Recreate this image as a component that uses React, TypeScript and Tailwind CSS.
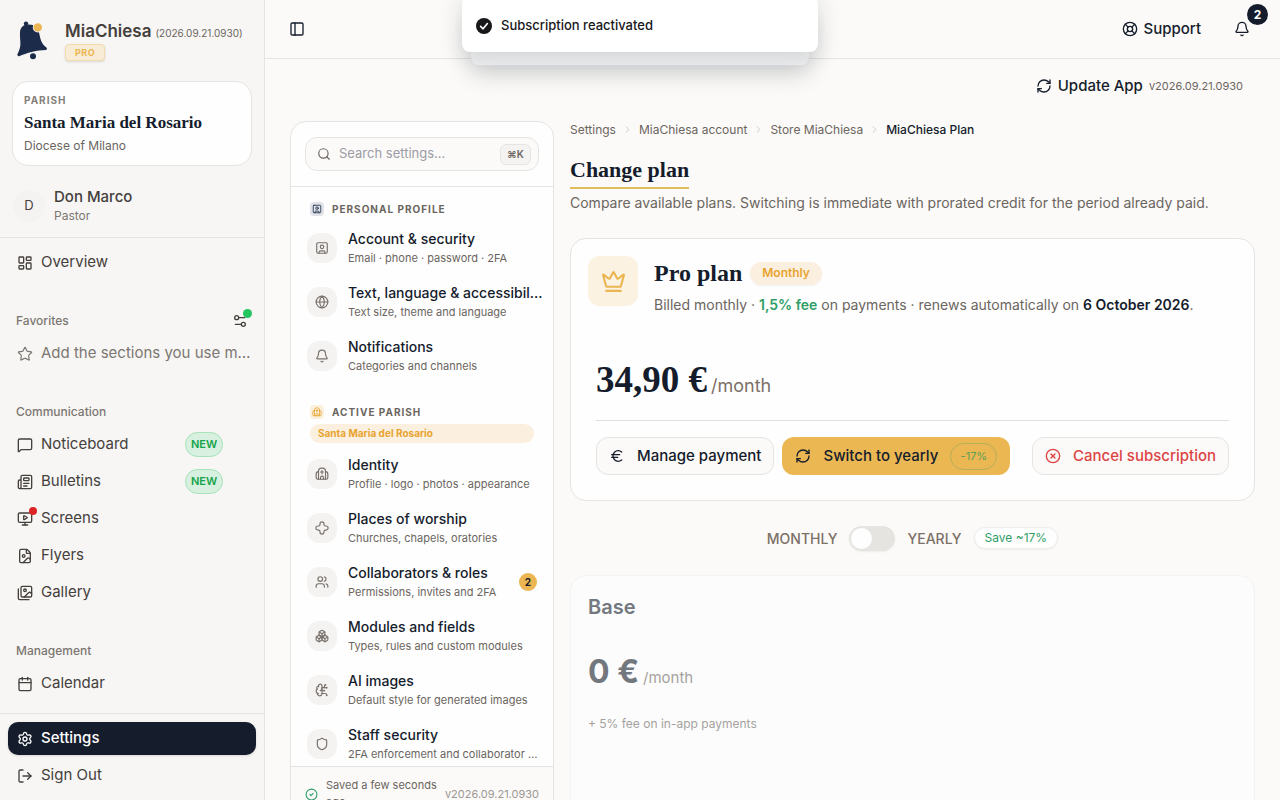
import { useState } from 'react'
import type { ComponentType, ReactNode } from 'react'
import {
  Bell,
  Boxes,
  BrainCircuit,
  Calendar,
  ChevronRight,
  CircleCheck,
  CircleX,
  Crown,
  Euro,
  FileImage,
  Globe,
  LayoutDashboard,
  LifeBuoy,
  LogOut,
  MessageSquare,
  MonitorPlay,
  Newspaper,
  PanelLeft,
  RefreshCw,
  Search,
  Settings,
  Settings2,
  Shield,
  SquareUser,
  Star,
  Users,
} from 'lucide-react'

const VERSION = '2026.09.21.0930'

type IconProps = { size?: number; strokeWidth?: number; className?: string }
type IconType = ComponentType<IconProps>
type NavItem = { label: string; icon: IconType; isNew?: boolean; alert?: boolean }
type SettingsItem = { title: string; sub: string; icon: IconType; count?: number }

// icons that lucide does not have in this shape
function Glyph({ size = 24, strokeWidth = 2, children }: IconProps & { children: ReactNode }) {
  return (
    <svg
      width={size}
      height={size}
      viewBox="0 0 24 24"
      fill="none"
      stroke="currentColor"
      strokeWidth={strokeWidth}
      strokeLinecap="round"
      strokeLinejoin="round"
      aria-hidden="true"
    >
      {children}
    </svg>
  )
}

function SoftCross(props: IconProps) {
  return (
    <Glyph {...props}>
      <path d="M8.5 5a3.5 3.5 0 0 1 7 0v1.5a2 2 0 0 0 2 2H19a3.5 3.5 0 0 1 0 7h-1.5a2 2 0 0 0-2 2V19a3.5 3.5 0 0 1-7 0v-1.5a2 2 0 0 0-2-2H5a3.5 3.5 0 0 1 0-7h1.5a2 2 0 0 0 2-2Z" />
    </Glyph>
  )
}

function ParishChurch(props: IconProps) {
  return (
    <Glyph {...props}>
      <path d="M6 21V7a5 5 0 0 1 5-5h2a5 5 0 0 1 5 5v14" />
      <path d="M6 8a4 4 0 0 0-4 4v6a3 3 0 0 0 3 3h14a3 3 0 0 0 3-3v-6a4 4 0 0 0-4-4" />
      <path d="M12 6v6" />
      <path d="M9.5 8.5h5" />
      <path d="M9.5 21v-3a2.5 2.5 0 0 1 5 0v3" />
    </Glyph>
  )
}

function ImageStack(props: IconProps) {
  return (
    <Glyph {...props}>
      <path d="M18 22H4a2 2 0 0 1-2-2V6" />
      <path d="m22 13-1.296-1.296a2.41 2.41 0 0 0-3.408 0L11 18" />
      <circle cx="12" cy="8" r="2" />
      <rect width="16" height="16" x="6" y="2" rx="2" />
    </Glyph>
  )
}

const communication: NavItem[] = [
  { label: 'Noticeboard', icon: MessageSquare, isNew: true },
  { label: 'Bulletins', icon: Newspaper, isNew: true },
  { label: 'Screens', icon: MonitorPlay, alert: true },
  { label: 'Flyers', icon: FileImage },
  { label: 'Gallery', icon: ImageStack },
]

const management: NavItem[] = [{ label: 'Calendar', icon: Calendar }]

const personal: SettingsItem[] = [
  { title: 'Account & security', sub: 'Email · phone · password · 2FA', icon: SquareUser },
  { title: 'Text, language & accessibility', sub: 'Text size, theme and language', icon: Globe },
  { title: 'Notifications', sub: 'Categories and channels', icon: Bell },
]

const parish: SettingsItem[] = [
  { title: 'Identity', sub: 'Profile · logo · photos · appearance', icon: ParishChurch },
  { title: 'Places of worship', sub: 'Churches, chapels, oratories', icon: SoftCross },
  { title: 'Collaborators & roles', sub: 'Permissions, invites and 2FA', icon: Users, count: 2 },
  { title: 'Modules and fields', sub: 'Types, rules and custom modules', icon: Boxes },
  { title: 'AI images', sub: 'Default style for generated images', icon: BrainCircuit },
  { title: 'Staff security', sub: '2FA enforcement and collaborator access', icon: Shield },
]

const crumbs = ['Settings', 'MiaChiesa account', 'Store MiaChiesa']

function Logo() {
  return (
    <svg width="32" height="40" viewBox="0 0 32 40" aria-hidden="true">
      <circle cx="9" cy="2.6" r="2.2" fill="#1c2b49" />
      <path
        d="M3 12C3 7 6 4 10 3.6C14 3.2 18 4.2 20 7C22.6 10.6 22.4 15 24 19.5C25.2 23 27.4 25 29.4 26.4C30.4 27.2 30 28.8 28.8 29C24 29.2 20 29.6 15.5 30.8C10 32.2 5.6 33.6 2.2 35.2C1 35.6 0 34.2 .5 33C2.4 29.4 3.6 26 3.4 21.5C3.2 18 2.8 15 3 12Z"
        fill="#1c2b49"
      />
      <circle cx="16" cy="35.2" r="3" fill="#1c2b49" />
      <circle cx="20.8" cy="6.4" r="5" fill="#f7f6f4" />
      <circle cx="20.8" cy="6.4" r="4.2" fill="#ebb551" />
    </svg>
  )
}

function NavLink({ item }: { item: NavItem }) {
  const Icon = item.icon
  return (
    <a href="#" className="flex h-[33px] items-center gap-2 rounded-lg px-[9px] text-[15px] text-[#44403c]">
      <span className="relative shrink-0">
        <Icon size={16} strokeWidth={2} />
        {item.alert && <span className="absolute -top-1 -right-1 size-2 rounded-full bg-[#dc2626]" />}
      </span>
      <span className="flex-1">{item.label}</span>
      {item.isNew && (
        <span className="mr-6 flex h-[25px] w-[38px] items-center justify-center rounded-full border border-[#a6e2bb] bg-[#d8f0e0] text-[11px] font-semibold text-[#16a34a]">
          NEW
        </span>
      )}
    </a>
  )
}

function NavGroup({ title, children, action }: { title: string; children: ReactNode; action?: ReactNode }) {
  return (
    <section className="mt-[25px]">
      <div className="flex h-[33px] items-center justify-between px-2">
        <h2 className="text-[12px] font-medium text-[#7c7772]">{title}</h2>
        {action}
      </div>
      <div className="flex flex-col gap-1">{children}</div>
    </section>
  )
}

function Sidebar() {
  return (
    <aside className="flex w-[265px] shrink-0 flex-col border-r border-[#e5e4e1] bg-[#f7f6f4]">
      <div className="flex items-center gap-4 px-[17px] pt-5">
        <Logo />
        <div className="min-w-0">
          <p className="flex items-baseline gap-1 leading-[22px] whitespace-nowrap">
            <span className="text-[17px] font-semibold text-[#44403c]">MiaChiesa</span>
            <span className="text-[10px] text-[#6b6560]">({VERSION})</span>
          </p>
          <span className="flex h-[17px] w-10 items-center justify-center rounded-sm border border-[#f2dcae] bg-[#f8ecd6] text-[9px] font-bold tracking-wider text-[#ebb551] shadow-sm">
            PRO
          </span>
        </div>
      </div>

      <div className="mx-3 mt-5 rounded-2xl border border-[#e5e4e1] bg-[#fefefe] p-[11px]">
        <p className="text-[10px] leading-[15px] font-bold tracking-widest text-[#857f7a]">PARISH</p>
        <p className="font-['Liberation_Serif',serif] text-[17px] leading-[30px] font-bold text-[#151c2c]">
          Santa Maria del Rosario
        </p>
        <p className="text-[12px] leading-[16px] text-[#6b6560]">Diocese of Milano</p>
      </div>

      <div className="flex items-center gap-[9px] px-[13px] pt-[21px] pb-3">
        <span className="flex size-8 items-center justify-center rounded-full bg-[#f4f3f1] text-[13px] text-[#44403c]">
          D
        </span>
        <div>
          <p className="text-[15px] leading-[20px] font-medium text-[#44403c]">Don Marco</p>
          <p className="text-[12px] leading-[18px] text-[#7c7772]">Pastor</p>
        </div>
      </div>

      <nav className="min-h-0 flex-1 overflow-hidden border-t border-[#e5e4e1] px-2 pt-2">
        <NavLink item={{ label: 'Overview', icon: LayoutDashboard }} />
        <NavGroup
          title="Favorites"
          action={
            <button className="relative text-[#44403c]" aria-label="Edit favorites">
              <Settings2 size={16} />
              <span className="absolute -top-1 -right-1 size-[9px] rounded-full bg-[#22c55e]" />
            </button>
          }
        >
          <a href="#" className="flex h-[33px] items-center gap-2 pr-1 pl-[9px] text-[15px] text-[#7c7772]">
            <Star size={16} strokeWidth={1.75} className="shrink-0" />
            <span className="truncate">Add the sections you use most</span>
          </a>
        </NavGroup>
        <NavGroup title="Communication">
          {communication.map(item => (
            <NavLink key={item.label} item={item} />
          ))}
        </NavGroup>
        <NavGroup title="Management">
          {management.map(item => (
            <NavLink key={item.label} item={item} />
          ))}
        </NavGroup>
      </nav>

      <div className="flex flex-col gap-1 border-t border-[#e5e4e1] p-2">
        <a
          href="#"
          className="flex h-[33px] items-center gap-2 rounded-[10px] bg-[#151d2d] px-[9px] text-[15px] font-medium text-white shadow-sm"
        >
          <Settings size={16} />
          Settings
        </a>
        <NavLink item={{ label: 'Sign Out', icon: LogOut }} />
      </div>
    </aside>
  )
}

function SettingsRow({ item }: { item: SettingsItem }) {
  const Icon = item.icon
  return (
    <a href="#" className="flex h-[54px] items-center gap-[11px]">
      <span className="flex size-[30px] shrink-0 items-center justify-center rounded-xl bg-[#f4f3f1] text-[#78716c]">
        <Icon size={14} strokeWidth={2} />
      </span>
      <span className="min-w-0 flex-1">
        <span className="-mr-2 block truncate text-[14px] leading-[20px] font-medium text-[#151c2c]">{item.title}</span>
        <span className="-mr-1 block truncate text-[11px] leading-[18px] text-[#6b6560]">{item.sub}</span>
      </span>
      {item.count && (
        <span className="flex size-[18px] items-center justify-center rounded-full bg-[#ebb551] text-[10px] font-bold text-[#151c2c]">
          {item.count}
        </span>
      )}
    </a>
  )
}

function SettingsPanel() {
  const [search, setSearch] = useState('')

  return (
    <div className="flex h-[calc(100vh-99px)] w-[264px] shrink-0 flex-col overflow-hidden rounded-2xl border border-[#e5e4e1] bg-[#fefefe]">
      <div className="border-b border-[#e5e4e1] px-[14px] py-[15px]">
        <label className="flex h-[34px] items-center gap-2 rounded-xl border border-[#e5e4e1] bg-[#fbfaf8] pr-[7px] pl-[11px]">
          <Search size={14} strokeWidth={2} className="shrink-0 text-[#6b6560]" />
          <input
            type="text"
            aria-label="Search settings"
            placeholder="Search settings..."
            value={search}
            onChange={e => setSearch(e.target.value)}
            className="min-w-0 flex-1 bg-transparent text-[13px] outline-none placeholder:text-[#9b9ca6]"
          />
          <kbd className="flex h-[21px] w-[31px] items-center justify-center rounded-md border border-[#e5e4e1] bg-[#f4f3f1] font-['Inter',sans-serif] text-[10px] font-semibold text-[#6b6560]">
            ⌘K
          </kbd>
        </label>
      </div>

      <div className="min-h-0 flex-1 overflow-hidden px-4 pt-[14px]">
        <h2 className="mb-1 flex h-4 items-center gap-2 px-[3px] text-[10px] font-bold tracking-widest text-[#6b6560]">
          <span className="flex size-[14px] items-center justify-center rounded-sm bg-[#e1e3e8] text-[#1c2b49]">
            <SquareUser size={10} />
          </span>
          PERSONAL PROFILE
        </h2>
        {personal.map(item => (
          <SettingsRow key={item.title} item={item} />
        ))}

        <h2 className="mt-[21px] flex h-4 items-center gap-2 px-[3px] text-[10px] font-bold tracking-widest text-[#6b6560]">
          <span className="flex size-[14px] items-center justify-center rounded-sm bg-[#fbf0dd] text-[#e8a330]">
            <ParishChurch size={10} />
          </span>
          ACTIVE PARISH
        </h2>
        <p className="mx-[3px] mt-1 mb-1 rounded-full bg-[#fbf0df] px-2 text-[10px] leading-[19px] font-bold text-[#e8a330]">
          Santa Maria del Rosario
        </p>
        {parish.map(item => (
          <SettingsRow key={item.title} item={item} />
        ))}
      </div>

      <footer className="flex h-[55px] shrink-0 items-center justify-between border-t border-[#e5e4e1] bg-[#fbfaf8] px-[14px] text-[11px]">
        <span className="flex items-center gap-2 text-[#6b6560]">
          <CircleCheck size={13} className="shrink-0 text-[#2f9e68]" />
          <span className="w-28 leading-[17px]">Saved a few seconds ago</span>
        </span>
        <span className="text-[#9c9793]">v{VERSION}</span>
      </footer>
    </div>
  )
}

function CurrentPlan() {
  return (
    <section className="rounded-2xl border border-[#e5e4e1] bg-[#fefefe] px-[17px] pt-[17px] pb-[25px]">
      <div className="flex gap-4">
        <span className="flex size-[50px] shrink-0 items-center justify-center rounded-xl bg-[#fbf2e1] text-[#ebb551]">
          <Crown size={25} strokeWidth={2} />
        </span>
        <div>
          <div className="flex h-[34px] items-center gap-2">
            <h2 className="font-['Liberation_Serif',serif] text-[24px] leading-[34px] font-bold text-[#151c2c]">
              Pro plan
            </h2>
            <span className="flex h-[23px] items-center rounded-full bg-[#fbf0df] px-3 text-[12px] font-semibold text-[#e8a330] shadow-xs">
              Monthly
            </span>
          </div>
          <p className="mt-1 text-[14px] leading-[22px] text-[#6b6560]">
            Billed monthly · <b className="font-semibold text-[#2f9e68]">1,5% fee</b> on payments · renews automatically
            on <b className="font-semibold text-[#151c2c]">6 October 2026</b>.
          </p>
        </div>
      </div>

      <div className="mx-2 mt-[42px] flex items-baseline gap-1 border-b border-[#e0dfdc] pb-3 leading-[44px]">
        <span className="font-['Liberation_Serif',serif] text-[37px] font-bold text-[#151c2c]">34,90 €</span>
        <span className="text-[18px] text-[#7c7067]">/month</span>
      </div>

      <div className="mx-2 mt-4 flex items-center gap-2 text-[15px] font-medium">
        <button className="flex h-[38px] items-center gap-3 rounded-xl border border-[#e5e4e1] bg-[#fcfaf9] px-3 text-[#151c2c]">
          <Euro size={16} strokeWidth={2} />
          Manage payment
        </button>
        <button className="flex h-[38px] items-center gap-3 rounded-xl bg-[#eab753] px-[13px] text-[#151c2c]">
          <RefreshCw size={16} strokeWidth={2} />
          Switch to yearly
          <span className="flex h-[27px] w-[47px] items-center justify-center rounded-full border border-[#b5af57] text-[11px] font-normal text-[#5d9f55]">
            -17%
          </span>
        </button>
        <button className="ml-auto flex h-[38px] items-center gap-3 rounded-xl border border-[#e5e4e1] bg-[#fcfaf9] px-3 text-[#dc4444]">
          <CircleX size={16} strokeWidth={2} />
          Cancel subscription
        </button>
      </div>
    </section>
  )
}

function BillingToggle() {
  const [yearly, setYearly] = useState(false)

  return (
    <div className="mt-6 flex h-[26px] items-center justify-center gap-3 text-[14px] font-medium text-[#7c7067]">
      <span>MONTHLY</span>
      <input
        type="checkbox"
        role="switch"
        aria-label="Yearly billing"
        checked={yearly}
        onChange={e => setYearly(e.target.checked)}
        className="flex h-[25px] w-[46px] shrink-0 appearance-none items-center rounded-full bg-[#e5e4e1] px-[2px] shadow-xs before:size-[21px] before:rounded-full before:bg-[#fefefe] checked:justify-end checked:bg-[#eab753]"
      />
      <span>YEARLY</span>
      <span className="flex h-[22px] items-center rounded-full border border-[#eeedeb] bg-[#fefefe] px-[10px] text-[12px] font-normal text-[#2f9e68] shadow-xs">
        Save ~17%
      </span>
    </div>
  )
}

function Toaster() {
  return (
    <div className="absolute top-[-4px] left-1/2 z-20 w-[356px] -translate-x-1/2" role="status">
      <div className="absolute inset-x-[9px] top-5 h-[49px] rounded-lg bg-[#f0f0f1] shadow-[0_8px_24px_rgba(21,28,44,0.2)]" />
      <div className="relative flex h-14 items-center gap-[9px] rounded-lg bg-white px-[14px] pt-1 text-[13px] font-medium text-[#18181b] shadow-[0_4px_24px_rgba(21,28,44,0.16)]">
        <svg width="16" height="16" viewBox="0 0 16 16" aria-hidden="true">
          <circle cx="8" cy="8" r="8" fill="#18181b" />
          <path d="M4.6 8.4L7 10.8L11.4 5.6" fill="none" stroke="#fff" strokeWidth="1.6" strokeLinecap="round" />
        </svg>
        Subscription reactivated
      </div>
    </div>
  )
}

export default function App() {
  return (
    <div className="relative flex h-screen overflow-hidden bg-[#fbfaf8] font-['Inter',sans-serif]">
      <Toaster />
      <Sidebar />

      <div className="min-w-0 flex-1">
        <header className="flex h-[59px] items-center justify-between border-b border-[#e5e4e1] px-6 text-[#151c2c]">
          <button aria-label="Toggle sidebar">
            <PanelLeft size={16} strokeWidth={2} />
          </button>
          <div className="flex items-center gap-[33px] pr-[6px]">
            <button className="flex items-center gap-[6px] text-[15px] font-medium">
              <LifeBuoy size={16} strokeWidth={2} />
              Support
            </button>
            <button className="relative" aria-label="Notifications">
              <Bell size={16} strokeWidth={2} />
              <span className="absolute -top-[17px] -right-[18px] flex size-[21px] items-center justify-center rounded-full bg-[#151c2c] text-[12px] font-bold text-white">
                2
              </span>
            </button>
          </div>
        </header>

        <div className="flex h-[62px] items-start justify-end pt-[15px] pr-[37px]">
          <button className="flex items-center gap-[6px] text-[15px] leading-[24px] font-medium text-[#151c2c]">
            <RefreshCw size={16} strokeWidth={2} />
            Update App
            <span className="text-[11px] font-normal text-[#6b6560]">v{VERSION}</span>
          </button>
        </div>

        <div className="flex gap-4 px-[25px]">
          <SettingsPanel />

          <main className="min-w-0 flex-1">
            <nav className="flex items-center gap-[6px] text-[12px] leading-[17px] text-[#6b6560]" aria-label="Breadcrumb">
              {crumbs.map(crumb => (
                <span key={crumb} className="flex items-center gap-[6px]">
                  <a href="#">{crumb}</a>
                  <ChevronRight size={11} className="text-[#c9c6c2]" />
                </span>
              ))}
              <span className="font-medium text-[#151c2c]">MiaChiesa Plan</span>
            </nav>

            <h1 className="mt-[18px] w-fit border-b-2 border-[#e2bd5e] pb-[3px] font-['Liberation_Serif',serif] text-[22px] leading-[28px] font-bold text-[#151c2c]">
              Change plan
            </h1>
            <p className="mt-[3px] mb-[25px] text-[14px] leading-[21px] text-[#6b6560]">
              Compare available plans. Switching is immediate with prorated credit for the period already paid.
            </p>

            <CurrentPlan />
            <BillingToggle />

            <section className="mt-6 h-[400px] rounded-2xl border border-[#f4f3f1] bg-[#fcfcfc] px-[17px] pt-4">
              <h2 className="text-[20px] leading-[30px] font-semibold text-[#73777e]">Base</h2>
              <p className="mt-[30px] flex items-baseline gap-1 leading-10">
                <span className="text-[32px] font-bold text-[#73777e]">0 €</span>
                <span className="text-[15px] text-[#a5a29e]">/month</span>
              </p>
              <p className="mt-4 text-[12px] leading-5 text-[#a5a29e]">+ 5% fee on in-app payments</p>
            </section>
          </main>
        </div>
      </div>
    </div>
  )
}
